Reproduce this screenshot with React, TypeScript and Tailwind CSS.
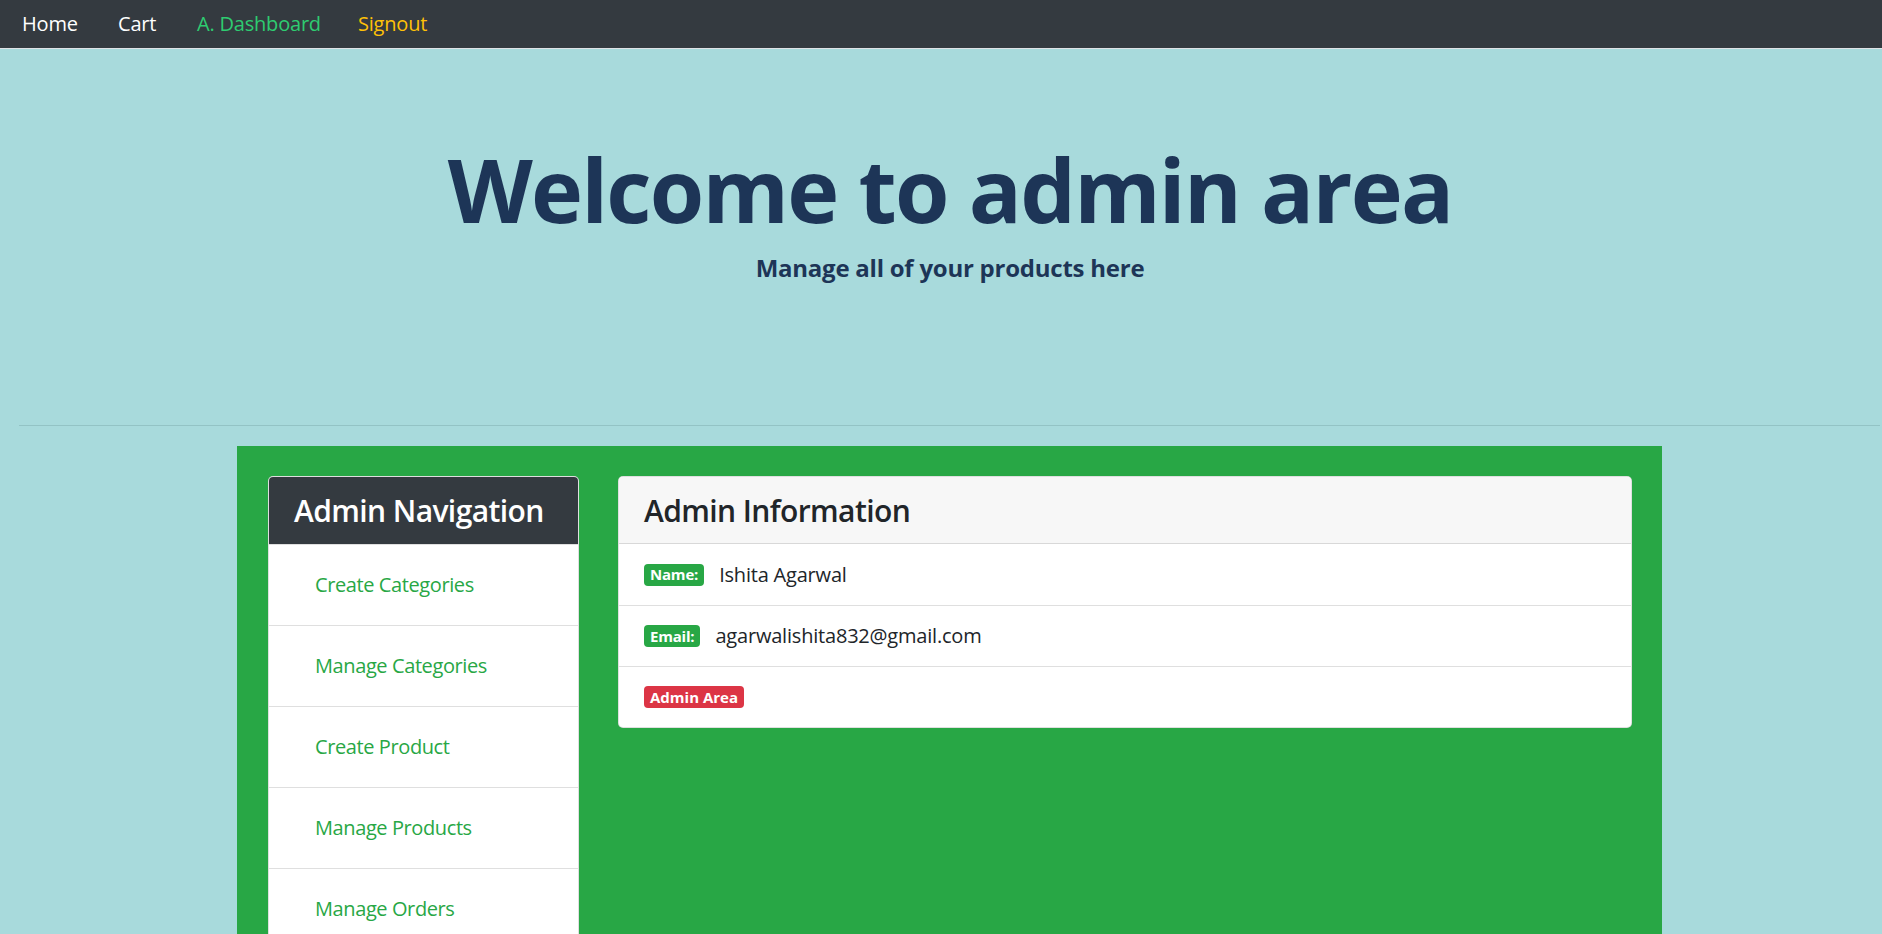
import React from 'react'

const navLinks = ['Create Categories', 'Manage Categories', 'Create Product', 'Manage Products', 'Manage Orders']

function Badge({ children, red }: { children: React.ReactNode; red?: boolean }) {
	return (
		<span className={`inline-flex h-[22px] items-center rounded-[4px] px-[6px] text-[15px] font-bold leading-none text-white ${red ? 'bg-[#dc3545]' : 'bg-[#28a745]'}`}>
			{children}
		</span>
	)
}

function App() {
	return (
		<div className="min-h-screen bg-[#a8dadc] font-['Open_Sans',sans-serif] text-[#212529]">
			<nav className="flex h-[49px] items-center border-b border-[#dee2e6] bg-[#343a40] pl-[22px] text-[20px] tracking-[-0.01em]">
				<span className="w-[96px] text-white">Home</span>
				<span className="w-[79px] text-white">Cart</span>
				<span className="w-[161px] text-[#2ecc71]">A. Dashboard</span>
				<span className="text-[#ffc107]">Signout</span>
			</nav>

			<div className="pt-[86px] pl-[18px] text-center text-[#1d3557]">
				<h1 className="text-[88px] font-bold leading-[108px] tracking-[-0.02em]">Welcome to admin area</h1>
				<p className="mt-[7px] text-[24px] font-bold tracking-[-0.01em]">Manage all of your products here</p>
			</div>
			<hr className="mt-[139px] ml-[19px] mr-[2px] border-t border-[#93c3c5]" />

			<div className="mt-[20px] ml-[237px] w-[1425px] bg-[#28a745] pt-[30px] pr-[30px] pb-[30px] pl-[31px]">
				<div className="flex items-start gap-[39px]">
					<div className="w-[311px] overflow-hidden rounded-[5px] border border-black/[.125] bg-white">
						<div className="flex h-[67px] items-center bg-[#343a40] px-[25px] text-[30px] font-semibold tracking-[-0.02em] text-white">
							Admin Navigation
						</div>
						{navLinks.map((l) => (
							<div key={l} className="flex h-[81px] items-center border-t border-black/[.125] pl-[46px] text-[20px] tracking-[-0.02em] text-[#28a745] first:border-t-0">
								{l}
							</div>
						))}
					</div>

					<div className="flex-1 overflow-hidden rounded-[5px] border border-black/[.125] bg-white">
						<div className="flex h-[67px] items-center border-b border-black/[.125] bg-[#f7f7f7] px-[25px] text-[30px] font-semibold tracking-[-0.02em]">
							Admin Information
						</div>
						<div className="flex h-[61px] items-center px-[25px] text-[20px] tracking-[-0.01em]">
							<Badge>Name:</Badge>
							<span className="ml-[15px]">Ishita Agarwal</span>
						</div>
						<div className="flex h-[61px] items-center border-t border-black/[.125] px-[25px] text-[20px] tracking-[-0.01em]">
							<Badge>Email:</Badge>
							<span className="ml-[15px]">agarwalishita832@gmail.com</span>
						</div>
						<div className="flex h-[61px] items-center border-t border-black/[.125] px-[25px]">
							<Badge red>Admin Area</Badge>
						</div>
					</div>
				</div>
			</div>
		</div>
	)
}

export default App
